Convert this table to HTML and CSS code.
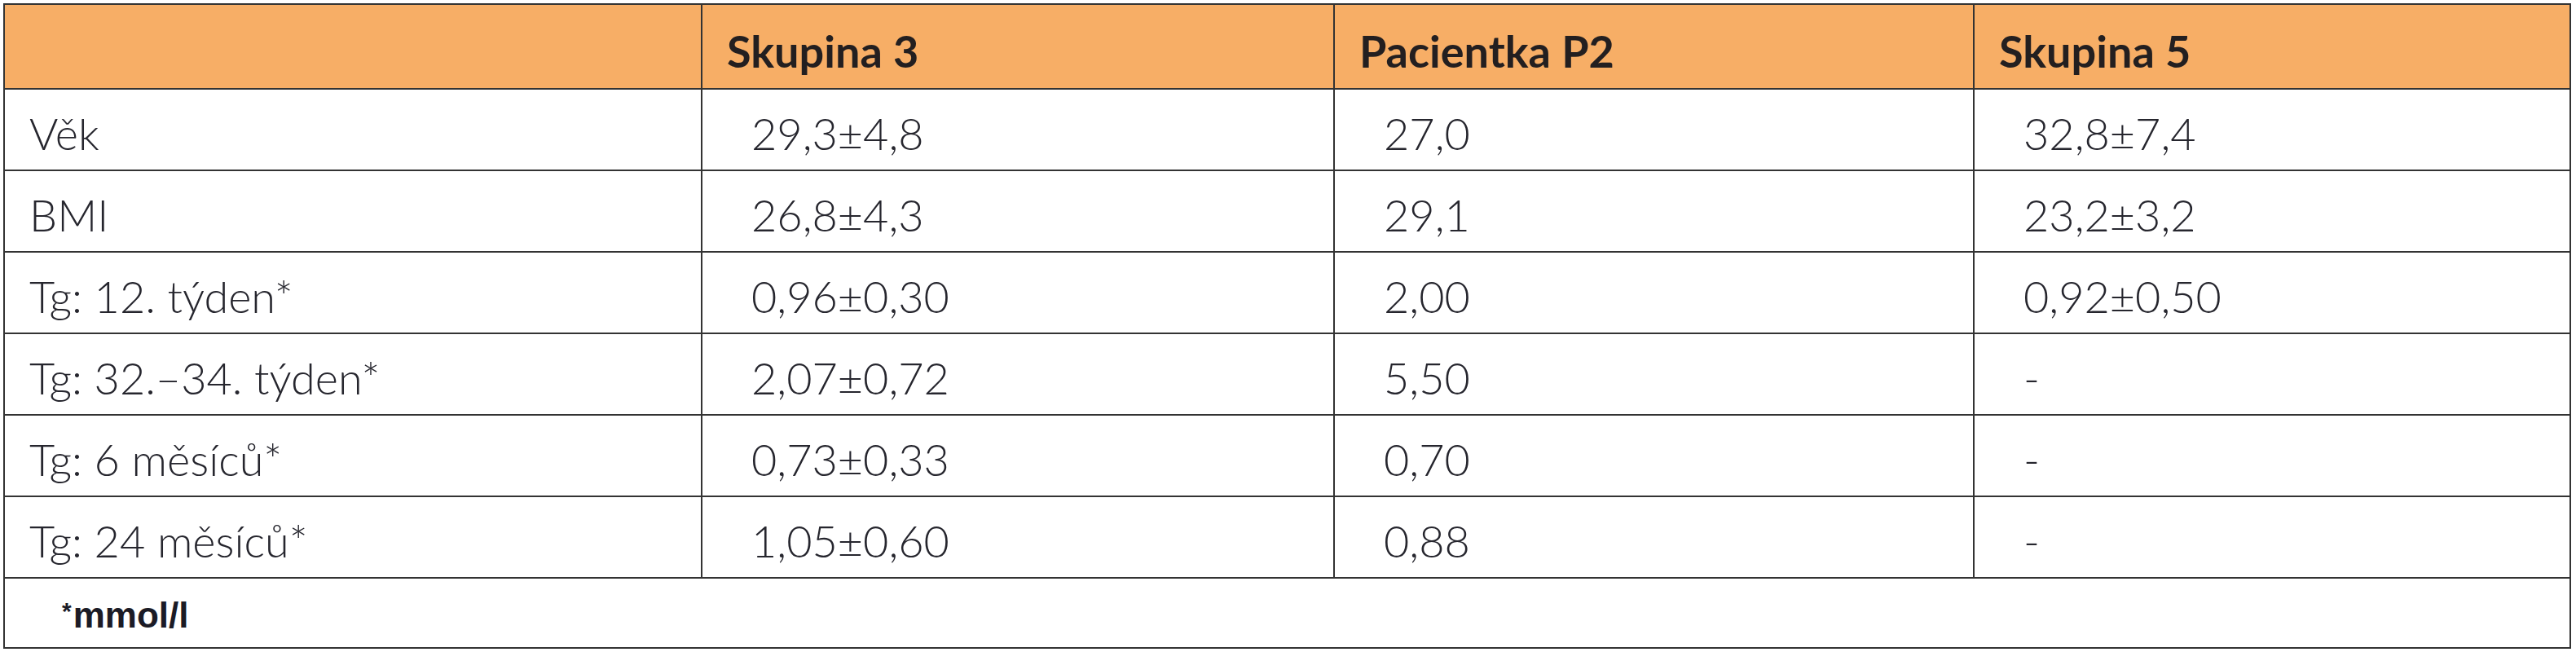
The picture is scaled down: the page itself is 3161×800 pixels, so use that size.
FILE: index.html
```html
<!DOCTYPE html>
<html lang="cs">
<head>
<meta charset="utf-8">
<title>Tabulka</title>
<link rel="stylesheet" href="styles.css">
</head>
<body>
<table class="data">
  <colgroup>
    <col class="c1"><col class="c2"><col class="c3"><col class="c4">
  </colgroup>
  <thead>
    <tr class="head">
      <th></th>
      <th>Skupina 3</th>
      <th>Pacientka P2</th>
      <th>Skupina 5</th>
    </tr>
  </thead>
  <tbody>
    <tr><td class="label">Věk</td><td class="val">29,3±4,8</td><td class="val">27,0</td><td class="val">32,8±7,4</td></tr>
    <tr><td class="label">BMI</td><td class="val">26,8±4,3</td><td class="val">29,1</td><td class="val">23,2±3,2</td></tr>
    <tr><td class="label">Tg: 12. týden*</td><td class="val">0,96±0,30</td><td class="val">2,00</td><td class="val">0,92±0,50</td></tr>
    <tr><td class="label">Tg: 32.–34. týden*</td><td class="val">2,07±0,72</td><td class="val">5,50</td><td class="val dash">-</td></tr>
    <tr><td class="label">Tg: 6 měsíců*</td><td class="val">0,73±0,33</td><td class="val">0,70</td><td class="val dash">-</td></tr>
    <tr><td class="label">Tg: 24 měsíců*</td><td class="val">1,05±0,60</td><td class="val">0,88</td><td class="val dash">-</td></tr>
    <tr class="foot"><td colspan="4"><span class="star">*</span>mmol/l</td></tr>
  </tbody>
</table>
</body>
</html>
```

FILE: styles.css
```css
html, body {
  margin: 0;
  padding: 0;
  background: #ffffff;
}

body {
  padding: 4px 0 0 4px;
}

.data {
  border-collapse: collapse;
  width: 3149px;
  table-layout: fixed;
  font-family: Lato, "Liberation Sans", sans-serif;
  color: #26262e;
}

.c1 { width: 856px; }
.c2 { width: 776px; }
.c3 { width: 785px; }
.c4 { width: 732px; }

.data th,
.data td {
  border: 2px solid #333333;
  padding: 8px 0 0 30px;
  text-align: left;
  vertical-align: middle;
  white-space: nowrap;
}

.head th {
  height: 92px;
  background: #f7ae66;
  font-weight: 700;
  font-size: 54px;
  color: #231f20;
  padding-top: 10px;
}

.data td {
  height: 90px;
  font-size: 54px;
  font-weight: 300;
}

.data td.val {
  padding-left: 60px;
}

.foot td {
  height: 78px;
  font-family: "Liberation Sans", Arial, sans-serif;
  font-weight: 700;
  font-size: 44px;
  color: #1b1b26;
  padding-left: 70px;
  padding-top: 6px;
}

.star {
  font-size: 30px;
  vertical-align: 10px;
  margin-right: 2px;
}
```
